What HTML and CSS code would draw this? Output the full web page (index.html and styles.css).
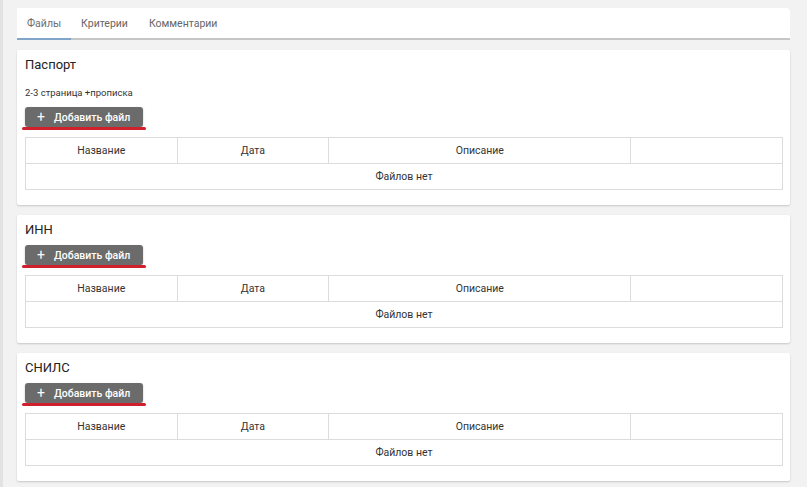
FILE: index.html
```html
<!DOCTYPE html>
<html lang="ru">
<head>
<meta charset="utf-8">
<title>Файлы</title>
<link rel="stylesheet" href="styles.css">
</head>
<body>
<div class="page">
  <nav class="tabs">
    <div class="tab active">Файлы</div>
    <div class="tab">Критерии</div>
    <div class="tab">Комментарии</div>
  </nav>

  <section class="card">
    <h2 class="card-title">Паспорт</h2>
    <p class="card-note">2-3 страница +прописка</p>
    <div class="btn-wrap"><button class="btn"><span class="plus">+</span>Добавить файл</button></div>
    <table class="files">
      <thead><tr><th class="c1">Название</th><th class="c2">Дата</th><th class="c3">Описание</th><th class="c4"></th></tr></thead>
      <tbody><tr><td colspan="4">Файлов нет</td></tr></tbody>
    </table>
  </section>

  <section class="card">
    <h2 class="card-title">ИНН</h2>
    <div class="btn-wrap"><button class="btn"><span class="plus">+</span>Добавить файл</button></div>
    <table class="files">
      <thead><tr><th class="c1">Название</th><th class="c2">Дата</th><th class="c3">Описание</th><th class="c4"></th></tr></thead>
      <tbody><tr><td colspan="4">Файлов нет</td></tr></tbody>
    </table>
  </section>

  <section class="card">
    <h2 class="card-title">СНИЛС</h2>
    <div class="btn-wrap"><button class="btn"><span class="plus">+</span>Добавить файл</button></div>
    <table class="files">
      <thead><tr><th class="c1">Название</th><th class="c2">Дата</th><th class="c3">Описание</th><th class="c4"></th></tr></thead>
      <tbody><tr><td colspan="4">Файлов нет</td></tr></tbody>
    </table>
  </section>
</div>
</body>
</html>
```

FILE: styles.css
```css
html, body {
  margin: 0;
  padding: 0;
}
body {
  background: #f2f2f2;
  font-family: Roboto, "Liberation Sans", Arial, sans-serif;
  color: #333;
  min-height: 487px;
  border-left: 3px solid #e2e2e2;
  box-sizing: border-box;
}
.page {
  padding: 8px 17px 0 14px;
  display: flex;
  flex-direction: column;
  gap: 10px;
}
.tabs {
  display: flex;
  height: 32px;
  background: #fff;
  border-top-right-radius: 4px;
  border-bottom: 2px solid #c6c6c6;
  box-sizing: border-box;
}
.tab {
  padding: 0 11px 0 10px;
  font-size: 10.5px;
  color: #666;
  display: flex;
  align-items: center;
  margin-bottom: -2px;
  border-bottom: 2px solid transparent;
}
.tab.active {
  border-bottom-color: #7fa6c8;
  color: #6e6e6e;
  padding-right: 10px;
}
.card {
  background: #fff;
  box-shadow: 0 1px 2px rgba(0, 0, 0, 0.18);
  padding: 6px 7px 15px 8px;
  border-radius: 2px;
}
.card-title {
  margin: 0 0 6px;
  font-size: 13px;
  line-height: 18px;
  font-weight: 400;
  color: #222;
}
.card-note {
  margin: 12px 0 7px;
  font-size: 9.5px;
  line-height: 14px;
  color: #333;
}
.btn-wrap {
  position: relative;
  display: inline-block;
  margin-bottom: 10px;
  vertical-align: top;
}
.btn-wrap::after {
  content: "";
  position: absolute;
  left: -3px;
  right: -3px;
  bottom: -3px;
  height: 3px;
  border-radius: 2px;
  background: #d0202c;
}
.btn {
  display: flex;
  align-items: center;
  height: 20px;
  width: 118px;
  padding: 0 0 0 12px;
  border: 0;
  border-radius: 3px;
  background: #6b6b6b;
  color: #fff;
  font-family: Roboto, "Liberation Sans", Arial, sans-serif;
  font-size: 10.5px;
  font-weight: 500;
  box-shadow: 0 1px 2px rgba(0, 0, 0, 0.25);
  box-sizing: border-box;
}
.plus {
  font-size: 14px;
  font-weight: 400;
  margin-right: 9px;
  line-height: 1;
}
.files {
  display: table;
  width: 100%;
  border-collapse: collapse;
  table-layout: fixed;
  font-size: 10.5px;
  color: #333;
}
.files th, .files td {
  border: 1px solid #dcdcdc;
  height: 25px;
  padding: 0;
  text-align: center;
  font-weight: 400;
}
.c1, .c2, .c4 { width: 20%; }
.c3 { width: 40%; }
```
